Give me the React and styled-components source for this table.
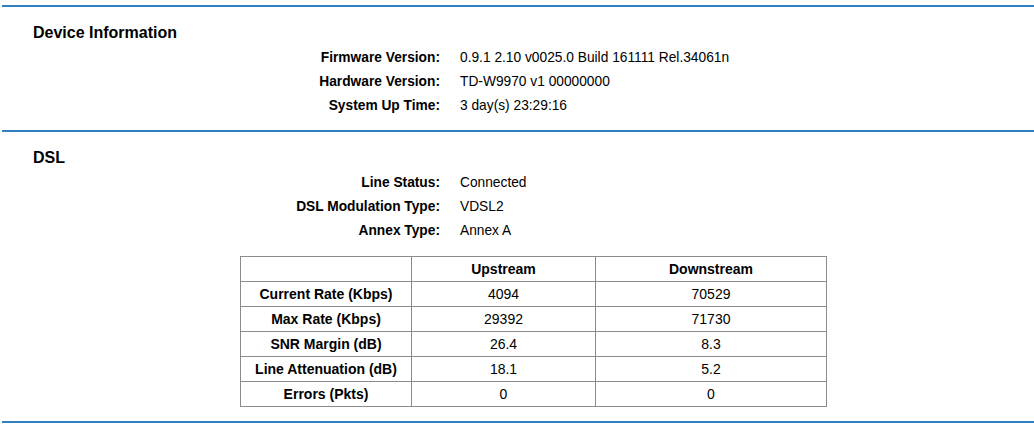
import styled, { createGlobalStyle } from 'styled-components';

const GlobalStyle = createGlobalStyle`
  html, body {
    margin: 0;
    padding: 0;
    background: #fff;
  }
  body {
    font-family: "Liberation Sans", Arial, sans-serif;
    color: #000;
  }
`

const deviceInfo = [
  ["Firmware Version:", "0.9.1 2.10 v0025.0 Build 161111 Rel.34061n"],
  ["Hardware Version:", "TD-W9970 v1 00000000"],
  ["System Up Time:", "3 day(s) 23:29:16"],
];

const dslInfo = [
  ["Line Status:", "Connected"],
  ["DSL Modulation Type:", "VDSL2"],
  ["Annex Type:", "Annex A"],
];

const dslStats = [
  ["Current Rate (Kbps)", "4094", "70529"],
  ["Max Rate (Kbps)", "29392", "71730"],
  ["SNR Margin (dB)", "26.4", "8.3"],
  ["Line Attenuation (dB)", "18.1", "5.2"],
  ["Errors (Pkts)", "0", "0"],
];

function App() {
  return (
    <>
      <GlobalStyle />
      <Page>
        <Section>
          <Title>Device Information</Title>
          <InfoList>
            {deviceInfo.map(([label, value]) => (
              <InfoRow key={label}>
                <Label>{label}</Label>
                <Value>{value}</Value>
              </InfoRow>
            ))}
          </InfoList>
        </Section>
        <Section>
          <Title>DSL</Title>
          <InfoList>
            {dslInfo.map(([label, value]) => (
              <InfoRow key={label}>
                <Label>{label}</Label>
                <Value>{value}</Value>
              </InfoRow>
            ))}
          </InfoList>
          <StatsTable>
            <colgroup>
              <col style={{ width: 171 }} />
              <col style={{ width: 184 }} />
              <col style={{ width: 231 }} />
            </colgroup>
            <thead>
              <tr>
                <Cell as="th" />
                <Cell as="th" $bold>Upstream</Cell>
                <Cell as="th" $bold>Downstream</Cell>
              </tr>
            </thead>
            <tbody>
              {dslStats.map(([name, up, down]) => (
                <tr key={name}>
                  <Cell $bold>{name}</Cell>
                  <Cell>{up}</Cell>
                  <Cell>{down}</Cell>
                </tr>
              ))}
            </tbody>
          </StatsTable>
        </Section>
      </Page>
    </>
  );
}

const Page = styled.main`
  margin-left: 2px;
  border-top: 2px solid #2f80c2;
  margin-top: 5px;
`

const Section = styled.section`
  padding: 14px 0 12px;
  border-bottom: 2px solid #2f80c2;

  & + & {
    padding-bottom: 14px;
  }
`

const Title = styled.h2`
  margin: 0 0 1px 31px;
  font-size: 16px;
  line-height: 24px;
  font-weight: bold;
`

const InfoList = styled.div`
  display: flex;
  flex-direction: column;
`

const InfoRow = styled.div`
  display: grid;
  grid-template-columns: 438px 1fr;
  column-gap: 20px;
  height: 24px;
  align-items: center;
  font-size: 13.75px;
  line-height: 24px;
`

const Label = styled.span`
  text-align: right;
  font-weight: bold;
`

const Value = styled.span`
  font-weight: normal;
`

const StatsTable = styled.table`
  margin: 13px 0 0 238px;
  border-collapse: collapse;
  table-layout: fixed;
  width: 587px;
  font-size: 14px;
`

const Cell = styled.td`
  border: 1px solid #8c8c8c;
  height: 24px;
  padding: 0;
  text-align: center;
  vertical-align: middle;
  font-weight: ${(props) => (props.$bold ? "bold" : "normal")};
`

export default App;
